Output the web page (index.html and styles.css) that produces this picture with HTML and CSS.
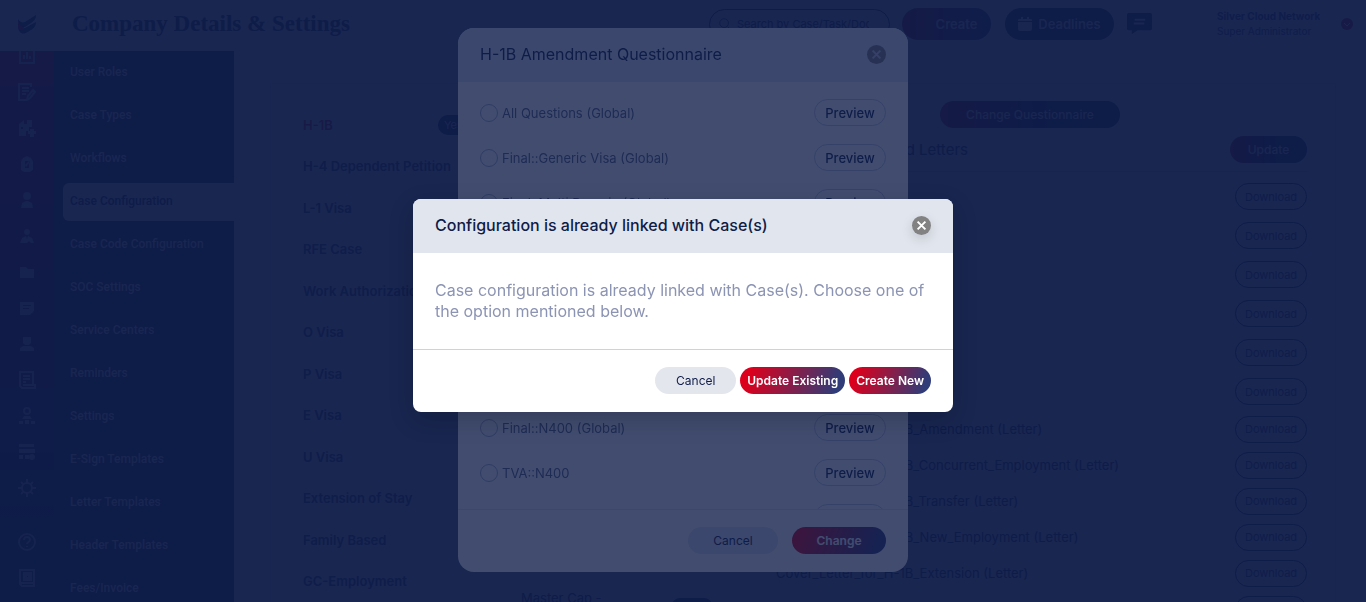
FILE: index.html
```html
<!DOCTYPE html>
<html lang="en">
<head>
    <meta charset="UTF-8">
    <meta name="viewport" content="width=device-width, initial-scale=1.0">
    <title>Company Details &amp; Settings</title>
    <link rel="stylesheet" href="styles.css">
</head>
<body>

<!-- Top bar -->
<header class="topbar">
    <svg class="logo" viewBox="0 0 20 22">
        <path d="M1 6c2 3 4 4 7 3l11-7c0 4-2 6-5 8l-6 4C4 15 1 12 1 6z" fill="#0e1c48"/>
        <path d="M1 13c2 2 4 3 7 2l11-6c0 4-2 6-5 8l-5 3c-4 2-8-1-8-7z" fill="#0e1c48"/>
        <path d="M1 6c0 5 2 8 6 8l-1 3c-3 0-5-1-5-4z" fill="#d6001c"/>
    </svg>
    <h1>Company Details &amp; Settings</h1>
    <label class="search">
        <svg viewBox="0 0 16 16"><circle cx="7" cy="7" r="5"/><path d="M11 11l3 3"/></svg>
        <input type="search" placeholder="Search by Case/Task/Docs" aria-label="Search">
    </label>
    <button class="top-btn create"><span class="plus">+</span>Create</button>
    <button class="top-btn deadlines">
        <svg viewBox="0 0 14 14"><path d="M0 5h14v7a2 2 0 0 1-2 2H2a2 2 0 0 1-2-2zM0 4V3a1 1 0 0 1 1-1h2V0h2v2h4V0h2v2h2a1 1 0 0 1 1 1v1z"/></svg>
        Deadlines
    </button>
    <button class="chat" aria-label="Messages">
        <svg viewBox="0 0 26 22"><path d="M2 0h22a2 2 0 0 1 2 2v14a2 2 0 0 1-2 2H11l-6 4v-4H2a2 2 0 0 1-2-2V2a2 2 0 0 1 2-2z" fill="#0e1c48"/><path d="M8 7h11M7 11h11" stroke="#fff" stroke-width="2"/></svg>
    </button>
    <div class="user">
        <strong>Silver Cloud Network</strong>
        <span>Super Administrator</span>
    </div>
    <button class="user-toggle" aria-label="Account menu">
        <svg viewBox="0 0 12 12"><path d="M3 5l3 3 3-3"/></svg>
    </button>
</header>

<div class="layout">
    <!-- Icon rail -->
    <nav class="rail">
        <a href="#" aria-label="Dashboard"><svg viewBox="0 0 18 18"><path class="line" d="M2 1v15h14V1M6 12V8M9 12V5M12 12V9"/></svg></a>
        <a href="#" aria-label="Forms"><svg viewBox="0 0 18 18"><path class="line" d="M13 4V1H1v16h8M4 5h7M4 8h7M4 11h4M9 17l1-4 5-6 2 2-5 6z"/></svg></a>
        <a href="#" aria-label="Companies"><svg viewBox="0 0 18 18"><path d="M1 5l5-4v4h3V1h5v7h-3v4H8v5H1zM3 8v2h2V8zM12 10h4v2h2v3h-2v3h-4v-3h-2v-3h2z"/></svg></a>
        <a href="#" aria-label="Tasks"><svg viewBox="0 0 18 18"><path fill-rule="evenodd" d="M5 3l4-2 4 2 2 3v9l-3 2H6l-3-2V6zM7 6v7h4V6zM8 12l-1-2 4-4 1 1z"/></svg></a>
        <a href="#" aria-label="Person"><svg viewBox="0 0 18 18"><circle cx="9" cy="5" r="4"/><path d="M3 17l1-5 4-2h2l4 2 1 5z"/></svg></a>
        <a href="#" aria-label="Beneficiaries"><svg viewBox="0 0 18 18"><circle cx="9" cy="5" r="3"/><path d="M2 16l2-5 4-2 1 3 1-3 4 2 2 5h-3l-2-2-2 2z"/></svg></a>
        <a href="#" aria-label="Documents"><svg viewBox="0 0 18 18"><path d="M2 4h6l2 2h6v9H2z"/></svg></a>
        <a href="#" aria-label="Notes"><svg viewBox="0 0 18 18"><path fill-rule="evenodd" d="M2 3h14v9l-4 4H2zM5 6v1h8V6zM5 9v1h6V9z"/></svg></a>
        <a href="#" aria-label="Contacts"><svg viewBox="0 0 18 18"><path d="M5 2h8v6l-2 2H7L5 8zM2 16v-3l3-2h8l3 2v3z"/></svg></a>
        <a href="#" aria-label="Invoices"><svg viewBox="0 0 18 18"><path class="line" d="M2 1h13v13h2v3H4l-2-2zM5 5h7M5 8h7M5 11h3M5 14h11"/></svg></a>
        <a href="#" aria-label="Team"><svg viewBox="0 0 18 18"><circle class="line" cx="9" cy="4" r="3"/><path d="M6 9h6l2 3H4zM1 17v-3h4v3zM7 17v-4h4v4zM13 17v-3h4v3z"/></svg></a>
        <a href="#" aria-label="Calendar"><svg viewBox="0 0 18 18"><path d="M1 1h15v3H1zM1 6h16v4H1zM1 12h4v4H1zM7 12h4v4H7z"/><circle cx="14" cy="14" r="3"/></svg></a>
        <a href="#" class="current" aria-label="Settings"><svg viewBox="0 0 18 18"><circle class="line" cx="9" cy="9" r="5"/><path class="line" d="M9 0v4M9 14v4M0 9h4M14 9h4M3 3l2 2M13 13l2 2M15 3l-2 2M5 13l-2 2"/></svg></a>
        <a href="#" class="help" aria-label="Help"><svg viewBox="0 0 18 18"><circle class="line" cx="9" cy="9" r="8"/><path class="line" d="M6 7c0-4 6-4 6 0 0 2-3 2-3 4M9 13v1"/></svg></a>
        <a href="#" aria-label="Directory"><svg viewBox="0 0 18 18"><path class="line" d="M2 1h14v16H4l-2-2zM2 14h14"/><path class="line" d="M6 4h7v7H6zM8 6h3v3H8z"/></svg></a>
    </nav>

    <!-- Settings menu -->
    <nav class="menu">
        <a href="#">User Roles</a>
        <a href="#">Case Types</a>
        <a href="#">Workflows</a>
        <a href="#" class="active">Case Configuration</a>
        <a href="#">Case Code Configuration</a>
        <a href="#">SOC Settings</a>
        <a href="#">Service Centers</a>
        <a href="#">Reminders</a>
        <a href="#">Settings</a>
        <a href="#">E-Sign Templates</a>
        <a href="#">Letter Templates</a>
        <a href="#">Header Templates</a>
        <a href="#">Fees/Invoice</a>
    </nav>

    <main class="content">
        <ul class="visa-list">
            <li class="selected">H-1B <span class="badge">Yes</span></li>
            <li>H-4 Dependent Petition</li>
            <li>L-1 Visa</li>
            <li>RFE Case</li>
            <li>Work Authorization</li>
            <li>O Visa</li>
            <li>P Visa</li>
            <li>E Visa</li>
            <li>U Visa</li>
            <li>Extension of Stay</li>
            <li>Family Based</li>
            <li>GC-Employment</li>
        </ul>
        <div class="subtypes">
            <span>Master Cap -</span>
            <span class="switch"></span>
        </div>
        <section class="letters">
            <button class="pill gradient change-q">Change Questionnaire</button>
            <div class="letters-head">
                <h2>Forms and Letters</h2>
                <button class="pill gradient update">Update</button>
            </div>
            <table>
                <tbody class="forms">
                    <tr><td></td><td><button class="pill outline">Download</button></td></tr>
                    <tr><td></td><td><button class="pill outline">Download</button></td></tr>
                    <tr><td></td><td><button class="pill outline">Download</button></td></tr>
                    <tr><td></td><td><button class="pill outline">Download</button></td></tr>
                    <tr><td></td><td><button class="pill outline">Download</button></td></tr>
                    <tr><td></td><td><button class="pill outline">Download</button></td></tr>
                </tbody>
                <tbody>
                    <tr><td>Cover_Letter_for_H-1B_Amendment (Letter)</td><td><button class="pill outline">Download</button></td></tr>
                    <tr><td>Cover_Letter_for_H-1B_Concurrent_Employment (Letter)</td><td><button class="pill outline">Download</button></td></tr>
                    <tr><td>Cover_Letter_for_H-1B_Transfer (Letter)</td><td><button class="pill outline">Download</button></td></tr>
                    <tr><td>Cover_Letter_for_H-1B_New_Employment (Letter)</td><td><button class="pill outline">Download</button></td></tr>
                    <tr><td>Cover_Letter_for_H-1B_Extension (Letter)</td><td><button class="pill outline">Download</button></td></tr>
                    <tr><td>I-140 (Form)</td><td><button class="pill outline">Download</button></td></tr>
                </tbody>
            </table>
        </section>
    </main>
</div>

<!-- Questionnaire picker -->
<div class="overlay">
    <div class="modal picker" role="dialog" aria-labelledby="picker-title">
        <div class="modal-head">
            <h2 id="picker-title">H-1B Amendment Questionnaire</h2>
            <button class="close" aria-label="Close"><svg viewBox="0 0 10 10"><path d="M2 2l6 6M8 2l-6 6"/></svg></button>
        </div>
        <div class="options">
            <div class="option"><label><input type="radio" name="q">All Questions (Global)</label><button class="pill preview">Preview</button></div>
            <div class="option"><label><input type="radio" name="q">Final::Generic Visa (Global)</label><button class="pill preview">Preview</button></div>
            <div class="option"><label><input type="radio" name="q">Final::Multi Domain (Global)</label><button class="pill preview">Preview</button></div>
            <div class="option"><label><input type="radio" name="q" aria-label="Option 4"></label><button class="pill preview">Preview</button></div>
            <div class="option"><label><input type="radio" name="q" aria-label="Option 5"></label><button class="pill preview">Preview</button></div>
            <div class="option"><label><input type="radio" name="q" aria-label="Option 6"></label><button class="pill preview">Preview</button></div>
            <div class="option"><label><input type="radio" name="q" aria-label="Option 7"></label><button class="pill preview">Preview</button></div>
            <div class="option"><label><input type="radio" name="q">Final::N400 (Global)</label><button class="pill preview">Preview</button></div>
            <div class="option"><label><input type="radio" name="q">TVA::N400</label><button class="pill preview">Preview</button></div>
            <div class="option"><label><input type="radio" name="q" aria-label="Option 10"></label><button class="pill preview">Preview</button></div>
        </div>
        <div class="modal-foot">
            <button class="pill cancel">Cancel</button>
            <button class="pill gradient">Change</button>
        </div>
    </div>
</div>

<!-- Confirmation -->
<div class="overlay">
    <div class="modal confirm" role="dialog" aria-labelledby="confirm-title">
        <div class="modal-head">
            <h2 id="confirm-title">Configuration is already linked with Case(s)</h2>
            <button class="close" aria-label="Close"><svg viewBox="0 0 10 10"><path d="M2 2l6 6M8 2l-6 6"/></svg></button>
        </div>
        <p class="message">Case configuration is already linked with Case(s). Choose one of the option mentioned below.</p>
        <div class="modal-foot">
            <button class="pill cancel">Cancel</button>
            <button class="pill gradient">Update Existing</button>
            <button class="pill gradient">Create New</button>
        </div>
    </div>
</div>

</body>
</html>
```

FILE: styles.css
```css
* {
    box-sizing: border-box;
}
body {
    margin: 0;
    height: 100vh;
    overflow: hidden;
    font-family: Inter, "Liberation Sans", sans-serif;
    font-size: 13px;
    color: #0e1c48;
    background-color: #fff;
}
button {
    font-family: inherit;
    border: none;
    padding: 0;
    cursor: pointer;
}
a {
    text-decoration: none;
}
h1, h2 {
    margin: 0;
}

/* Top bar */
.topbar {
    position: relative;
    z-index: 1;
    display: flex;
    align-items: center;
    height: 51px;
    padding: 0 13px 3px 17px;
    background-color: #fff;
}
.logo {
    width: 20px;
    height: 22px;
}
.topbar h1 {
    margin-left: 35px;
    font-family: "Liberation Serif", serif;
    font-size: 23px;
    font-weight: bold;
}
.search {
    display: flex;
    align-items: center;
    width: 181px;
    height: 31px;
    margin-left: auto;
    padding: 0 8px;
    border: 1px solid #0e1c48;
    border-radius: 16px;
}
.search svg {
    flex: none;
    width: 14px;
    height: 14px;
    margin-right: 5px;
    fill: none;
    stroke: #0e1c48;
}
.search input {
    width: 100%;
    padding: 0;
    border: none;
    outline: none;
    background: none;
    font-family: inherit;
    font-size: 11px;
}
.search input::placeholder {
    color: #0e1c48;
}
.top-btn {
    display: flex;
    align-items: center;
    justify-content: center;
    gap: 6px;
    height: 32px;
    border-radius: 16px;
    color: #fff;
    font-size: 13px;
    font-weight: 600;
}
.create {
    width: 89px;
    margin-left: 12px;
    background: linear-gradient(90deg, #b4001c, #303c78);
}
.plus {
    width: 14px;
    color: #d6001c;
}
.deadlines {
    width: 109px;
    margin-left: 14px;
    background-color: #0e1c48;
}
.deadlines svg {
    width: 14px;
    height: 14px;
    fill: #fff;
}
.chat {
    width: 25px;
    height: 22px;
    margin-left: 13px;
    background: none;
}
.user {
    display: flex;
    flex-direction: column;
    width: 124px;
    margin-left: 65px;
    line-height: 15px;
    font-size: 10px;
    color: #303c78;
    white-space: nowrap;
}
.user-toggle {
    width: 12px;
    height: 12px;
    border-radius: 50%;
    background-color: #d6001c;
}
.user-toggle svg {
    display: block;
    fill: none;
    stroke: #fff;
}

/* Layout */
.layout {
    display: flex;
    height: calc(100vh - 51px);
}
.rail {
    width: 54px;
    background: linear-gradient(180deg, #b4002a, #0e1c48 85%);
}
.rail a {
    display: flex;
    align-items: center;
    justify-content: center;
    height: 36px;
}
.rail a:first-child {
    margin-top: -13px;
}
.rail .current {
    background-color: #0e1c48;
}
.rail .help {
    margin-top: 18px;
}
.rail svg {
    width: 18px;
    height: 18px;
    fill: #b4bad0;
}
.rail .line {
    fill: none;
    stroke: #b4bad0;
    stroke-width: 2;
}
.menu {
    display: flex;
    flex-direction: column;
    gap: 5px;
    width: 180px;
    padding: 3px 0 0 9px;
    background-color: #0e1c48;
    font-family: Roboto, sans-serif;
    font-size: 12px;
    font-weight: 500;
}
.menu a {
    flex: none;
    height: 38px;
    padding-left: 7px;
    line-height: 36px;
    color: #fff;
}
.menu .active {
    border-radius: 6px 0 0 6px;
    background-color: #fff;
    color: #0e1c48;
}

/* Content */
.content {
    flex: 1;
    display: flex;
    margin: 32px 30px 0 36px;
    border: 1px solid #e6e9f2;
    border-bottom: none;
}
.visa-list {
    display: grid;
    grid-auto-rows: 1fr;
    width: 200px;
    height: calc(100vh - 104px);
    margin: 20px 0 0 20px;
    padding: 0;
    list-style: none;
    font-weight: 600;
}
.visa-list li {
    display: flex;
    align-items: center;
    justify-content: space-between;
    padding-left: 12px;
    color: #303c68;
}
.visa-list .selected {
    color: #d6001c;
}
.badge {
    width: 53px;
    height: 20px;
    padding-left: 6px;
    border-radius: 10px;
    line-height: 20px;
    font-size: 11px;
    font-weight: normal;
    color: #fff;
    background-color: #0e1c48;
}
.subtypes {
    display: flex;
    align-items: flex-end;
    justify-content: space-between;
    width: 191px;
    margin-left: 30px;
    margin-bottom: -4px;
}
.switch {
    width: 40px;
    height: 8px;
    border-radius: 10px 10px 0 0;
    background-color: #0e1c48;
}
.letters {
    flex: 1;
    margin: 17px 28px 0 64px;
}
.change-q {
    display: block;
    width: 180px;
    margin-left: 164px;
}
.letters-head {
    display: flex;
    align-items: center;
    justify-content: space-between;
    height: 44px;
    border-bottom: 1px solid #d4d8e6;
}
.letters-head h2 {
    margin-left: 64px;
    font-size: 15px;
    font-weight: normal;
}
.letters .gradient {
    font-weight: 500;
    background: linear-gradient(90deg, #b4001c, #0e1c48 60%);
}
.update {
    width: 77px;
}
.letters table {
    width: 100%;
    margin-top: 5px;
    border-collapse: collapse;
}
.letters td {
    height: 36px;
    padding: 0;
    white-space: nowrap;
}
.letters .forms td {
    height: 39px;
}
.letters td + td {
    text-align: right;
}

/* Buttons */
.pill {
    height: 27px;
    border-radius: 14px;
    font-size: 12px;
    color: #0e1c48;
    white-space: nowrap;
}
.gradient {
    color: #fff;
    font-weight: 600;
    background: linear-gradient(110deg, #dc001c 10%, #303c78 90%);
}
.outline {
    width: 72px;
    border: 1px solid #0e1c48;
    background: none;
    font-size: 11px;
    color: #303c68;
}
.preview {
    width: 72px;
    border: 1px solid #c4c9dc;
    background: none;
    font-size: 13px;
    font-weight: 500;
}
.cancel {
    background-color: #e4e6ee;
}

/* Modals */
.overlay {
    position: fixed;
    inset: 0;
    z-index: 2;
    display: flex;
    align-items: flex-start;
    justify-content: center;
    background-color: rgba(14, 28, 72, 0.79);
}
.modal {
    overflow: hidden;
    background-color: #fff;
}
.modal-head {
    display: flex;
    align-items: center;
    justify-content: space-between;
    height: 54px;
    padding: 0 22px 2px;
    background-color: #e1e6ee;
}
.modal-head h2 {
    font-size: 16px;
    font-weight: 500;
}
.close {
    width: 19px;
    height: 19px;
    border-radius: 50%;
    background-color: #828282;
    box-shadow: 0 4px 12px rgba(0, 0, 0, 0.15);
}
.close svg {
    display: block;
    width: 13px;
    height: 13px;
    margin: 0 auto;
    fill: none;
    stroke: #fff;
    stroke-width: 1.5;
}
.picker {
    width: 450px;
    margin-top: 28px;
    border-radius: 16px;
}
.picker .modal-head h2 {
    font-weight: normal;
}
.picker .close {
    background-color: #828282;
    box-shadow: none;
}
.picker .close svg {
    stroke: #c4c9dc;
}
.options {
    height: calc(100vh - 175px);
    padding-top: 8px;
    overflow: hidden;
}
.option {
    display: flex;
    align-items: center;
    justify-content: space-between;
    height: 45px;
    padding: 0 22px;
}
.option label {
    display: flex;
    align-items: center;
    gap: 4px;
    color: #5c6484;
}
.option input {
    appearance: none;
    width: 18px;
    height: 18px;
    margin: 0;
    border: 1px solid #a8aec4;
    border-radius: 50%;
}
.modal-foot {
    display: flex;
    justify-content: flex-end;
    align-items: center;
    height: 63px;
    padding: 0 22px 2px;
    border-top: 1px solid #ccd2e2;
}
.picker .modal-foot {
    gap: 14px;
    border-color: #e4e8f0;
}
.picker .modal-foot .cancel {
    width: 90px;
}
.picker .modal-foot .gradient {
    width: 94px;
}
.confirm {
    width: 540px;
    margin-top: 199px;
    border-radius: 8px;
    box-shadow: 0 8px 24px rgba(0, 0, 0, 0.2);
}
.message {
    margin: 0;
    padding: 27px 22px;
    line-height: 21px;
    font-size: 16px;
    color: #8c94b4;
}
.confirm .modal-foot {
    gap: 4px;
}
.confirm .cancel {
    width: 81px;
}
.confirm .gradient {
    padding: 0 7px;
}
```
